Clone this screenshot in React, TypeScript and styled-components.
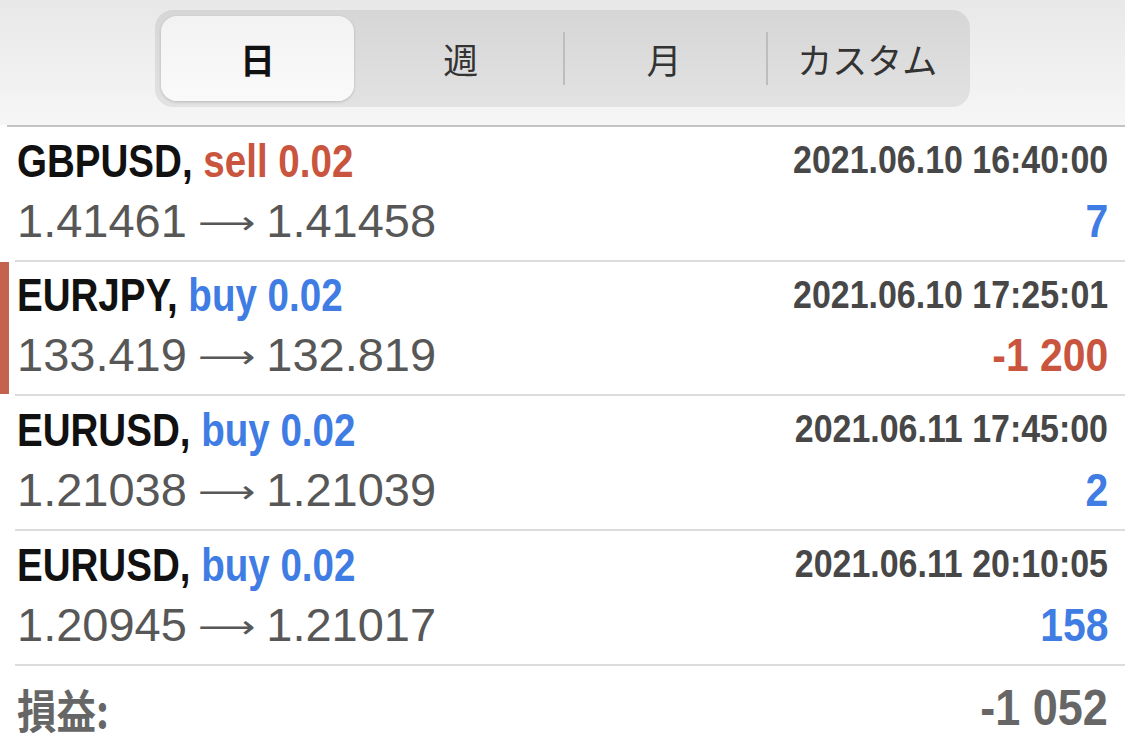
import React from "react";
import styled, { createGlobalStyle } from "styled-components";

const Global = createGlobalStyle`
  html, body { margin: 0; padding: 0; background: #ffffff; overflow: hidden; }
  body { font-family: "Liberation Sans", Arial, sans-serif; }
`;

const Page = styled.div`
  width: 1125px;
  height: 743px;
  display: flex;
  flex-direction: column;
  background: #fff;
  overflow: hidden;
`;

const Header = styled.div`
  flex-shrink: 0;
  height: 125px;
  background: linear-gradient(#e8e8e8, #f6f6f6);
  display: flex;
  justify-content: center;
  align-items: flex-start;
  padding-top: 10px;
  box-sizing: border-box;
`;

const HeaderRule = styled.div`
  flex-shrink: 0;
  height: 2px;
  margin-left: 7px;
  background: #c4c4c4;
`;

const Segmented = styled.div`
  width: 815px;
  height: 97px;
  border-radius: 18px;
  background: linear-gradient(#d6d6d6, #e2e2e2);
  display: grid;
  grid-template-columns: repeat(4, 1fr);
  align-items: center;
  padding: 0 1px;
  box-sizing: border-box;
`;

const Segment = styled.div<{ $active?: boolean; $sep?: boolean }>`
  height: ${(p) => (p.$active ? "85px" : "100%")};
  margin: ${(p) => (p.$active ? "0 5px" : "0")};
  border-radius: 16px;
  display: flex;
  align-items: center;
  justify-content: center;
  font-family: "Noto Sans CJK JP", sans-serif;
  font-size: 35px;
  color: ${(p) => (p.$active ? "#111" : "#333")};
  font-weight: ${(p) => (p.$active ? 700 : 400)};
  background: ${(p) => (p.$active ? "linear-gradient(#f2f2f2, #fafafa)" : "transparent")};
  box-shadow: ${(p) => (p.$active ? "0 1px 3px rgba(0,0,0,0.18)" : "none")};
  position: relative;
  &::before {
    content: "";
    display: ${(p) => (p.$sep ? "block" : "none")};
    position: absolute;
    left: 0;
    top: 22px;
    bottom: 22px;
    width: 2px;
    background: #bdbdbd;
  }
`;

const List = styled.div`
  flex-shrink: 0;
  display: flex;
  flex-direction: column;
`;

const Row = styled.div<{ $mark?: boolean }>`
  flex-shrink: 0;
  height: 132.7px;
  box-sizing: border-box;
  display: grid;
  grid-template-columns: 1fr auto;
  grid-template-rows: 66px 54px;
  padding: 0 17px 0 8px;
  border-left: 9px solid ${(p) => (p.$mark ? "#c4624f" : "transparent")};
`;

const Divider = styled.div`
  flex-shrink: 0;
  height: 2px;
  margin-left: 15px;
  background: #dcdcdc;
`;

const Condensed = styled.span<{ $scale: number; $right?: boolean }>`
  display: inline-block;
  white-space: nowrap;
  transform: scaleX(${(p) => p.$scale});
  transform-origin: ${(p) => (p.$right ? "right" : "left")} center;
`;

const Symbol = styled.div`
  font-family: "Liberation Sans", Arial, sans-serif;
  font-weight: 700;
  font-size: 47px;
  color: #111;
  align-self: center;
  white-space: nowrap;
`;

const Side = styled.span<{ $sell?: boolean }>`
  color: ${(p) => (p.$sell ? "#c9553f" : "#3f7ce3")};
`;

const DateText = styled.div`
  font-family: "Liberation Sans", Arial, sans-serif;
  font-weight: 700;
  font-size: 39px;
  color: #474747;
  align-self: center;
  text-align: right;
`;

const Prices = styled.div`
  font-family: "Liberation Sans", Arial, sans-serif;
  font-size: 47px;
  color: #575757;
  align-self: center;
  white-space: nowrap;
`;

const Arrow = styled.span`
  font-family: "DejaVu Sans", sans-serif;
  font-size: 40px;
  margin: 0 11px;
  display: inline-block;
  transform: scaleY(0.8);
`;

const Profit = styled.div<{ $neg?: boolean }>`
  font-family: "Liberation Sans", Arial, sans-serif;
  font-weight: 700;
  font-size: 47px;
  color: ${(p) => (p.$neg ? "#c9553f" : "#3f7ce3")};
  align-self: center;
  text-align: right;
`;

const Footer = styled.div`
  flex: 1;
  min-height: 0;
  display: flex;
  justify-content: space-between;
  align-items: center;
  padding: 8px 17px 0 17px;
  color: #666;
  line-height: 1;
`;

const FooterLabel = styled.div`
  font-family: "Noto Sans CJK JP", sans-serif;
  font-weight: 700;
  font-size: 46px;
`;

const FooterValue = styled.div`
  font-family: "Liberation Sans", Arial, sans-serif;
  font-weight: 700;
  font-size: 50px;
`;

type Trade = {
  symbol: string;
  side: "buy" | "sell";
  lots: string;
  time: string;
  open: string;
  close: string;
  profit: string;
  mark?: boolean;
};

const trades: Trade[] = [
  { symbol: "GBPUSD", side: "sell", lots: "0.02", time: "2021.06.10 16:40:00", open: "1.41461", close: "1.41458", profit: "7" },
  { symbol: "EURJPY", side: "buy", lots: "0.02", time: "2021.06.10 17:25:01", open: "133.419", close: "132.819", profit: "-1 200", mark: true },
  { symbol: "EURUSD", side: "buy", lots: "0.02", time: "2021.06.11 17:45:00", open: "1.21038", close: "1.21039", profit: "2" },
  { symbol: "EURUSD", side: "buy", lots: "0.02", time: "2021.06.11 20:10:05", open: "1.20945", close: "1.21017", profit: "158" },
];

export default function App() {
  return (
    <Page>
      <Global />
      <Header>
        <Segmented>
          <Segment $active>日</Segment>
          <Segment>週</Segment>
          <Segment $sep>月</Segment>
          <Segment $sep>カスタム</Segment>
        </Segmented>
      </Header>
      <HeaderRule />
      <List>
        {trades.map((t, i) => (
          <React.Fragment key={i}>
            <Row $mark={t.mark}>
              <Symbol>
                <Condensed $scale={0.82}>
                  {t.symbol}, <Side $sell={t.side === "sell"}>{t.side} {t.lots}</Side>
                </Condensed>
              </Symbol>
              <DateText>
                <Condensed $scale={0.87} $right>{t.time}</Condensed>
              </DateText>
              <Prices>
                {t.open}<Arrow>⟶</Arrow>{t.close}
              </Prices>
              <Profit $neg={t.profit.startsWith("-")}>
                <Condensed $scale={0.87} $right>{t.profit}</Condensed>
              </Profit>
            </Row>
            <Divider />
          </React.Fragment>
        ))}
      </List>
      <Footer>
        <FooterLabel>
          <Condensed $scale={0.86}>損益:</Condensed>
        </FooterLabel>
        <FooterValue>
          <Condensed $scale={0.9} $right>-1 052</Condensed>
        </FooterValue>
      </Footer>
    </Page>
  );
}
